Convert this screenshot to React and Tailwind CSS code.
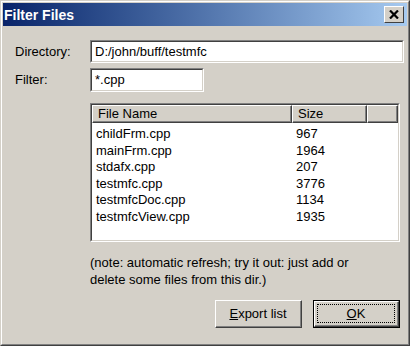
import React from "react";

const files = [
  ["childFrm.cpp", "967"],
  ["mainFrm.cpp", "1964"],
  ["stdafx.cpp", "207"],
  ["testmfc.cpp", "3776"],
  ["testmfcDoc.cpp", "1134"],
  ["testmfcView.cpp", "1935"],
];

/* sunken edit box like the old win32 controls */
const Sunken = ({ className, children }) => (
  <div className={"border border-t-[#808080] border-l-[#808080] border-r-white border-b-white " + className}>
    <div className="h-full border border-t-[#404040] border-l-[#404040] border-r-[#d4d0c8] border-b-[#d4d0c8] bg-white">
      {children}
    </div>
  </div>
);

const HeaderCell = ({ className, children }) => (
  <div className={"h-full border border-t-white border-l-white border-r-[#404040] border-b-[#404040] " + className}>
    <div className="h-full border-r border-b border-r-[#808080] border-b-[#808080] pl-[5px] leading-[15px]">
      {children}
    </div>
  </div>
);

export default function App() {
  return (
    <div
      className="w-[410px] h-[346px] border border-t-[#d4d0c8] border-l-[#d4d0c8] border-r-[#404040] border-b-[#404040] text-[13px] text-black"
      style={{ fontFamily: '"Liberation Sans", Arial, sans-serif' }}
    >
      <div className="h-full border border-t-white border-l-white border-r-[#808080] border-b-[#808080] bg-[#d4d0c8] p-px flex flex-col">
        {/* title bar */}
        <div className="h-[23px] bg-gradient-to-r from-[#0a246a] to-[#a6caf0] flex items-center pl-[1px] pr-[3px]">
          <span className="text-white font-bold text-[14px] leading-none">Filter Files</span>
          <button className="ml-auto w-[20px] h-[17px] border border-t-white border-l-white border-r-[#404040] border-b-[#404040] bg-[#d4d0c8] flex items-center justify-center">
            <svg width="10" height="9" viewBox="0 0 10 9">
              <path d="M1 0.5 L9 8.5 M9 0.5 L1 8.5" stroke="black" strokeWidth="2.2" />
            </svg>
          </button>
        </div>

        <div className="pl-[12px] pr-[3px] flex flex-col">
          {/* directory */}
          <div className="mt-[14px] flex items-center">
            <span className="w-[75px]">Directory:</span>
            <Sunken className="w-[314px] h-[23px]">
              <div className="pl-[3px] leading-[19px]">D:/john/buff/testmfc</div>
            </Sunken>
          </div>

          {/* filter */}
          <div className="mt-[5px] flex items-center">
            <span className="w-[75px]">Filter:</span>
            <Sunken className="w-[114px] h-[24px]">
              <div className="pl-[3px] leading-[20px]">*.cpp</div>
            </Sunken>
          </div>

          {/* file list */}
          <div className="ml-[75px] mt-[11px]">
            <Sunken className="w-[310px] h-[139px]">
              <div className="flex h-[18px] bg-[#d4d0c8]">
                <HeaderCell className="w-[200px]">File Name</HeaderCell>
                <HeaderCell className="w-[75px]">Size</HeaderCell>
                <HeaderCell className="flex-1" />
              </div>
              <div className="pt-[3px]">
                {files.map(([name, size]) => (
                  <div key={name} className="flex h-[16.6px] leading-[16.6px]">
                    <span className="w-[200px] pl-[4px]">{name}</span>
                    <span className="pl-[4px]">{size}</span>
                  </div>
                ))}
              </div>
            </Sunken>
          </div>

          {/* note */}
          <p className="ml-[75px] mt-[12px] leading-[17px]">
            (note: automatic refresh; try it out: just add or
            <br />
            delete some files from this dir.)
          </p>

          {/* buttons */}
          <div className="mt-[12px] flex justify-end gap-[11px] pr-[4px]">
            <button className="w-[87px] h-[28px] border border-t-white border-l-white border-r-[#404040] border-b-[#404040]">
              <div className="h-full border-r border-b border-r-[#808080] border-b-[#808080] flex items-center justify-center">
                <span>
                  <span className="underline">E</span>xport list
                </span>
              </div>
            </button>
            <button className="w-[87px] h-[28px] border border-black">
              <div className="h-full border border-t-white border-l-white border-r-[#404040] border-b-[#404040]">
                <div className="h-full border-r border-b border-r-[#808080] border-b-[#808080] p-[2px]">
                  <div className="h-full border border-dotted border-black flex items-center justify-center">
                    <span>
                      <span className="underline">O</span>K
                    </span>
                  </div>
                </div>
              </div>
            </button>
          </div>
        </div>
      </div>
    </div>
  );
}
